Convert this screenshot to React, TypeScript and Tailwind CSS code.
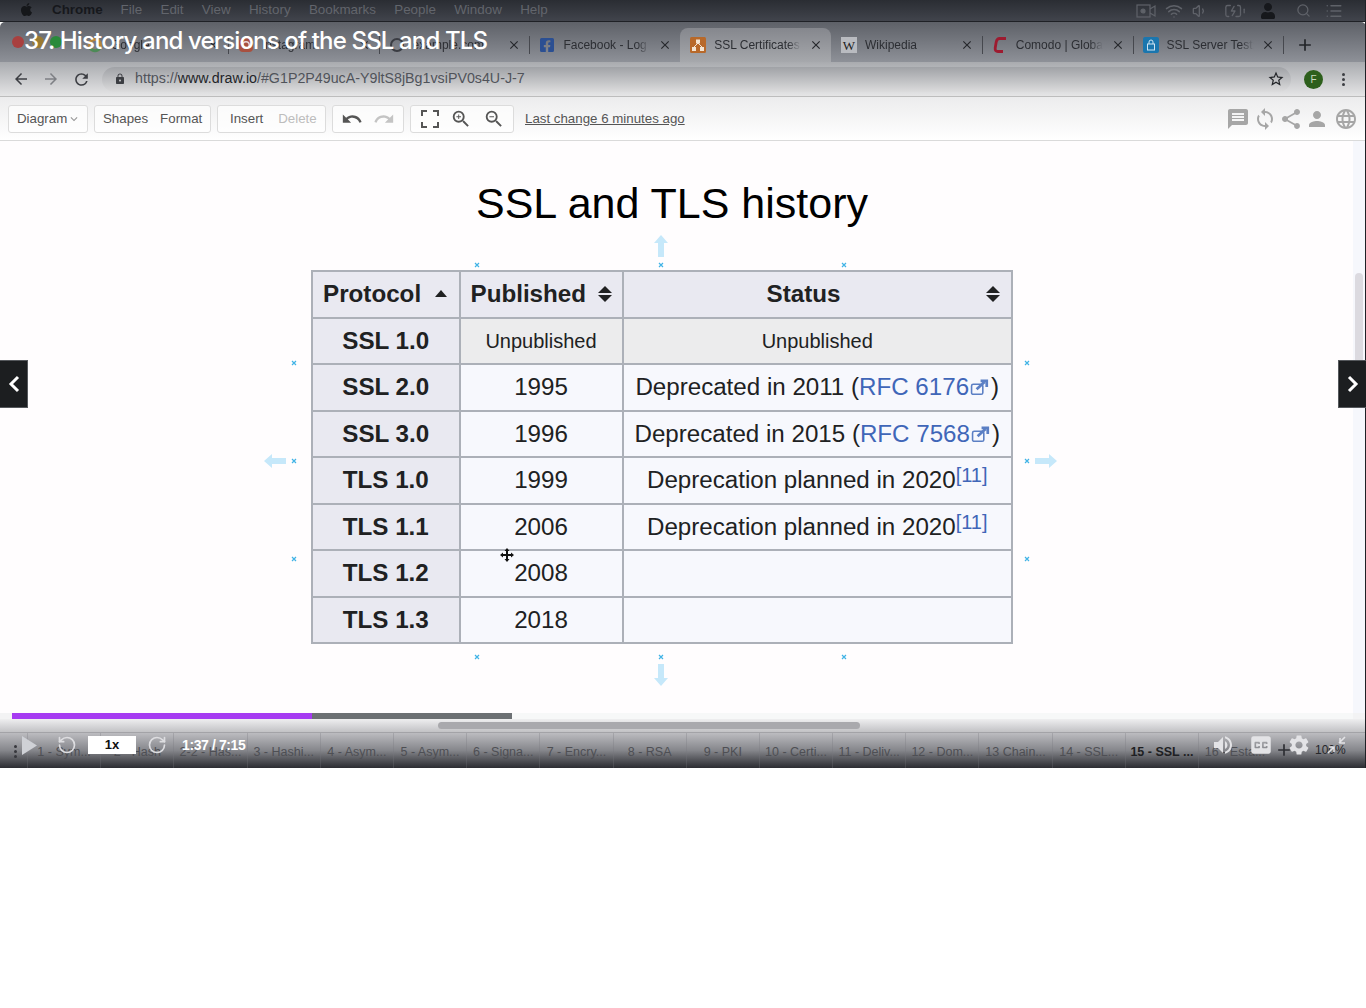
import React from "react";
import { FaApple, FaUser, FaFacebookSquare } from "react-icons/fa";
import {
  MdUndo, MdRedo, MdZoomIn, MdZoomOut, MdMessage, MdSync, MdShare, MdPerson, MdLanguage,
  MdKeyboardArrowDown, MdStarBorder, MdLock, MdArrowBack, MdArrowForward, MdRefresh, MdClose, MdAdd, MdVolumeUp, MdSettings, MdClosedCaption,
} from "react-icons/md";
import { Wifi, Volume1, BatteryCharging, Search, List, RotateCcw, RotateCw } from "lucide-react";

const menu = ["File", "Edit", "View", "History", "Bookmarks", "People", "Window", "Help"];

function Fav({ kind }: { kind: string }) {
  if (kind === "google")
    return (
      <svg width="16" height="16" viewBox="0 0 16 16">
        <circle cx="8" cy="8" r="5.5" fill="none" stroke="#b5863a" strokeWidth="3" />
        <path d="M3 11a6 6 0 0 0 10 0" fill="none" stroke="#4c8a58" strokeWidth="3" />
      </svg>
    );
  if (kind === "insta")
    return (
      <svg width="16" height="16" viewBox="0 0 16 16">
        <rect x="1" y="1" width="14" height="14" rx="4" fill="#a8503f" />
        <circle cx="8" cy="8" r="3.2" fill="none" stroke="#e8d8d8" strokeWidth="1.4" />
      </svg>
    );
  if (kind === "gh")
    return (
      <svg width="16" height="16" viewBox="0 0 16 16">
        <circle cx="8" cy="8" r="6" fill="none" stroke="#3a3c42" strokeWidth="2" />
      </svg>
    );
  if (kind === "fb") return <FaFacebookSquare className="text-[16px] text-[#2b4f92]" />;
  if (kind === "draw")
    return (
      <svg width="16" height="16" viewBox="0 0 16 16">
        <rect width="16" height="16" rx="1.5" fill="#b8692a" />
        <rect x="6" y="2.5" width="4" height="4" fill="#f3e4d2" />
        <rect x="2" y="10" width="4" height="4" fill="#f3e4d2" />
        <rect x="10" y="10" width="4" height="4" fill="#f3e4d2" />
        <path d="M8 6 4 10M8 6l4 4" stroke="#f3e4d2" strokeWidth="1" />
      </svg>
    );
  if (kind === "wiki")
    return (
      <span className="flex h-4 w-4 items-center justify-center bg-[#b9bbc0] font-['Liberation_Serif',serif] text-[13px] leading-none text-[#222]">
        W
      </span>
    );
  if (kind === "comodo")
    return (
      <svg width="16" height="18" viewBox="0 0 16 18">
        <path d="M14 2.5H7.5Q5 2.5 4.2 6L3.2 12Q2.8 15.5 6 15.5H11" fill="none" stroke="#9d1b30" strokeWidth="2.8" />
      </svg>
    );
  return (
    <svg width="16" height="16" viewBox="0 0 16 16">
      <rect width="16" height="16" rx="2" fill="#1b76ae" />
      <rect x="4.5" y="7" width="7" height="6" fill="none" stroke="#cfe4f2" strokeWidth="1" />
      <path d="M6 7V5a2 2 0 0 1 4 0v2" fill="none" stroke="#cfe4f2" strokeWidth="1" />
    </svg>
  );
}

const tabs = [
  { k: "google", t: "Google", sep: false },
  { k: "insta", t: "Instagram", sep: true },
  { k: "gh", t: "example.com", sep: true },
  { k: "fb", t: "Facebook - Log In", sep: true },
  { k: "draw", t: "SSL Certificates", sep: false, active: true },
  { k: "wiki", t: "Wikipedia", sep: false },
  { k: "comodo", t: "Comodo | Global", sep: true },
  { k: "lock", t: "SSL Server Test:", sep: true },
];

const chapters = [
  "1 - Sym...", "2 - Hash", "2-2 - Has...", "3 - Hashi...", "4 - Asym...", "5 - Asym...", "6 - Signa...", "7 - Encry...",
  "8 - RSA", "9 - PKI", "10 - Certi...", "11 - Deliv...", "12 - Dom...", "13 Chain...", "14 - SSL...", "15 - SSL ...", "16 - Esta...",
];

const handles = [
  [477, 265], [661, 265], [844, 265],
  [294, 363], [294, 461], [294, 559],
  [1027, 363], [1027, 461], [1027, 559],
  [477, 657], [661, 657], [844, 657],
];

function Ext() {
  return (
    <svg width="22" height="18" viewBox="0 0 18 16" className="inline-block align-[-1px]">
      <rect x="1.5" y="5.5" width="10" height="9" rx="1.5" fill="none" stroke="#5b7fc4" strokeWidth="1.4" />
      <path d="M6 10 13 3.5M9.5 2.5H15V8" fill="none" stroke="#5b7fc4" strokeWidth="2.4" />
    </svg>
  );
}

function SortUp() {
  return (
    <svg width="12" height="8" viewBox="0 0 12 8">
      <path d="M6 0 12 7H0Z" fill="#202122" />
    </svg>
  );
}

function Sort() {
  return (
    <svg width="14" height="16" viewBox="0 0 14 16">
      <path d="M7 0 14 7H0Z" fill="#202122" />
      <path d="M7 16 14 9H0Z" fill="#202122" />
    </svg>
  );
}

function Ref() {
  return <sup className="relative -top-[6px] align-baseline text-[20px] leading-none text-[#3f66b8]">[11]</sup>;
}

const th = "border-2 border-[#acb0b8] bg-[#e9e9f1] p-0 font-bold text-[#202122]";
const rowHead = "border-2 border-[#acb0b8] bg-[#e9e9f1] p-0 text-center text-[24.2px] font-bold text-[#202122]";
const td = "border-2 border-[#acb0b8] bg-[#f7f8fd] p-0 text-center text-[24.15px] text-[#202122]";
const tdGray = "border-2 border-[#acb0b8] bg-[#ececed] p-0 text-center text-[20px] text-[#202122]";

export default function App() {
  return (
    <div className="relative min-h-[1008px] bg-white font-['Liberation_Sans',Arial,sans-serif]">
      <div className="relative flex h-[768px] flex-col overflow-hidden">
        {/* menu bar */}
        <div className="flex h-[22px] shrink-0 items-center border-b border-[#1f2126] bg-gradient-to-b from-[#2a2d33] to-[#41444c] pl-[19px] pr-[23px] text-[13.4px] text-[#62656c]">
          <FaApple className="mb-[2px] text-[15px] text-[#15171a]" />
          <span className="ml-[18px] font-bold text-[#16181c]">Chrome</span>
          <div className="ml-[18px] flex gap-[18.3px]">
            {menu.map((m) => (
              <span key={m}>{m}</span>
            ))}
          </div>
          <div className="ml-auto flex items-center text-[#5f6269]">
            <svg width="20" height="14" viewBox="0 0 20 14" fill="none" stroke="currentColor" strokeWidth="1.2">
              <rect x="1" y="1" width="13" height="12" />
              <circle cx="7" cy="7" r="2" fill="currentColor" />
              <path d="M14 5l5-3v10l-5-3" />
            </svg>
            <Wifi size={18} className="ml-[9px]" />
            <Volume1 size={16} className="ml-[9px]" />
            <BatteryCharging size={22} strokeWidth={1.4} className="ml-[16px]" />
            <FaUser className="ml-[14px] text-[16px] text-[#16181c]" />
            <Search size={15} className="ml-[20px]" />
            <List size={18} className="ml-[14px]" />
          </div>
        </div>

        {/* tab strip */}
        <div className="flex h-[40px] shrink-0 items-end rounded-t-[5px] bg-gradient-to-b from-[#5e6168] to-[#8e9198] pl-[77px] text-[12px] text-[#2c2e33]">
          {tabs.map((t) => (
            <div
              key={t.t}
              className={
                "relative flex h-[34px] w-[150.8px] shrink-0 items-center pl-[10px] pr-[8px] " +
                (t.active ? "rounded-t-[8px] bg-gradient-to-b from-[#85878d] to-[#a6a8ac]" : "")
              }
            >
              <span className="flex w-[16px] shrink-0 justify-center">
                <Fav kind={t.k} />
              </span>
              <span className="ml-[8px] w-[87px] overflow-hidden whitespace-nowrap [mask-image:linear-gradient(to_right,black_85%,transparent)]">
                {t.t}
              </span>
              <MdClose className="ml-auto text-[14px] text-[#26282c]" />
              {t.sep && <span className="absolute left-0 top-[8px] h-[18px] w-px bg-[#46484e]" />}
            </div>
          ))}
          <span className="relative flex h-[34px] items-center">
            <span className="h-[18px] w-px bg-[#46484e]" />
            <MdAdd className="ml-[11px] text-[20px] text-[#222428]" />
          </span>
        </div>

        {/* address bar */}
        <div className="flex h-[35px] shrink-0 items-center border-b border-[#bdbdbd] bg-gradient-to-b from-[#a9abaf] to-[#e5e5e6] pl-[12px] pr-[14px] text-[#3c3e43]">
          <MdArrowBack className="text-[18px]" />
          <MdArrowForward className="ml-[12px] text-[18px] text-[#7d7f84]" />
          <MdRefresh className="ml-[12px] text-[19px]" />
          <div className="ml-[11px] flex h-[25px] w-[1189px] items-center rounded-full bg-gradient-to-b from-[#a0a2a6] to-[#dcdcdd] pl-[12px] pr-[6px]">
            <MdLock className="text-[12px]" />
            <span className="ml-[9px] text-[14.25px] text-[#50535a]">
              https://<span className="text-[#222428]">www.draw.io</span>/#G1P2P49ucA-Y9ltS8jBg1vsiPV0s4U-J-7
            </span>
            <MdStarBorder className="ml-auto text-[18px] text-[#222428]" />
          </div>
          <span className="ml-[13px] flex h-[19px] w-[19px] items-center justify-center rounded-full bg-[#2d5f1c] text-[10px] text-[#c8d8c0]">
            F
          </span>
          <span className="ml-[19px] flex flex-col gap-[2px]">
            <i className="h-[3px] w-[3px] rounded-full bg-[#3c3e43]" />
            <i className="h-[3px] w-[3px] rounded-full bg-[#3c3e43]" />
            <i className="h-[3px] w-[3px] rounded-full bg-[#3c3e43]" />
          </span>
        </div>

        {/* draw.io toolbar */}
        <div className="flex h-[44px] shrink-0 items-center border-b border-[#dadada] bg-gradient-to-b from-[#ececed] to-white pl-[8px] pr-[8px] text-[13.3px] text-[#555]">
          <div className="flex h-[28px] w-[80px] items-center rounded-[3px] border border-[#dcdcdc] bg-white/70 pl-[8px]">
            Diagram
            <MdKeyboardArrowDown className="text-[14px] text-[#999]" />
          </div>
          <div className="ml-[6px] flex h-[28px] w-[117px] items-center gap-[12px] rounded-[3px] border border-[#dcdcdc] bg-white/70 pl-[8px]">
            <span>Shapes</span>
            <span>Format</span>
          </div>
          <div className="ml-[6px] flex h-[28px] w-[109px] items-center gap-[15px] rounded-[3px] border border-[#dcdcdc] bg-white/70 pl-[12px]">
            <span>Insert</span>
            <span className="text-[#bdbdbd]">Delete</span>
          </div>
          <div className="ml-[6px] flex h-[28px] w-[72px] items-center gap-[10px] rounded-[3px] border border-[#dcdcdc] bg-white/70 pl-[8px] text-[22px]">
            <MdUndo />
            <MdRedo className="text-[#c4c4c4]" />
          </div>
          <div className="ml-[6px] flex h-[28px] w-[104px] items-center gap-[11px] rounded-[3px] border border-[#dcdcdc] bg-white/70 pl-[10px] text-[22px]">
            <svg width="18" height="18" viewBox="0 0 18 18" fill="none" stroke="currentColor" strokeWidth="2">
              <path d="M1 6V1h5M12 1h5v5M17 12v5h-5M6 17H1v-5" />
            </svg>
            <MdZoomIn />
            <MdZoomOut />
          </div>
          <span className="ml-[11px] underline">Last change 6 minutes ago</span>
          <div className="ml-auto flex items-center text-[24px] text-[#a6a6a6]">
            <MdMessage />
            <MdSync className="ml-[3px]" />
            <MdShare className="ml-[2px]" />
            <MdPerson className="ml-[2px]" />
            <MdLanguage className="ml-[5px]" />
          </div>
        </div>

        {/* canvas */}
        <div className="relative flex min-h-0 flex-1 bg-[#fffdfe]">
          <div className="flex-1 pl-[311px]">
            <h1 className="ml-[165px] mt-[35px] whitespace-nowrap text-[43px] font-normal leading-[54px] text-black">
              SSL and TLS history
            </h1>
            <table className="mt-[40px] h-[373px] w-[700px] table-fixed border-collapse">
              <colgroup>
                <col className="w-[147.5px]" />
                <col className="w-[163px]" />
                <col className="w-[389.5px]" />
              </colgroup>
              <thead>
                <tr className="h-[46.5px]">
                  <th className={th}>
                    <div className="flex items-center justify-between pl-[10px] pr-[12px] text-[24.2px]">
                      Protocol <SortUp />
                    </div>
                  </th>
                  <th className={th}>
                    <div className="flex items-center justify-between pl-[10px] pr-[10px] text-[24.2px]">
                      Published <Sort />
                    </div>
                  </th>
                  <th className={th}>
                    <div className="flex items-center justify-between pl-[143px] pr-[11px] text-[24.2px]">
                      Status <Sort />
                    </div>
                  </th>
                </tr>
              </thead>
              <tbody>
                <tr className="h-[46.5px]">
                  <td className={rowHead}>SSL 1.0</td>
                  <td className={tdGray}>Unpublished</td>
                  <td className={tdGray}>Unpublished</td>
                </tr>
                <tr className="h-[46.5px]">
                  <td className={rowHead}>SSL 2.0</td>
                  <td className={td}>1995</td>
                  <td className={td}>
                    Deprecated in 2011 (<span className="text-[#3f66b8]">RFC 6176</span>
                    <Ext />)
                  </td>
                </tr>
                <tr className="h-[46.5px]">
                  <td className={rowHead}>SSL 3.0</td>
                  <td className={td}>1996</td>
                  <td className={td}>
                    Deprecated in 2015 (<span className="text-[#3f66b8]">RFC 7568</span>
                    <Ext />)
                  </td>
                </tr>
                <tr className="h-[46.5px]">
                  <td className={rowHead}>TLS 1.0</td>
                  <td className={td}>1999</td>
                  <td className={td}>
                    Deprecation planned in 2020
                    <Ref />
                  </td>
                </tr>
                <tr className="h-[46.5px]">
                  <td className={rowHead}>TLS 1.1</td>
                  <td className={td}>2006</td>
                  <td className={td}>
                    Deprecation planned in 2020
                    <Ref />
                  </td>
                </tr>
                <tr className="h-[46.5px]">
                  <td className={rowHead}>TLS 1.2</td>
                  <td className={td}>2008</td>
                  <td className={td} />
                </tr>
                <tr className="h-[46.5px]">
                  <td className={rowHead}>TLS 1.3</td>
                  <td className={td}>2018</td>
                  <td className={td} />
                </tr>
              </tbody>
            </table>
          </div>
          {/* canvas scrollbar */}
          <div className="w-[13px] shrink-0 bg-[#f6f7fc] pl-[2px] pt-[132px]">
            <div className="h-[120px] w-[8px] rounded-full bg-[#dcdae0]" />
          </div>
        </div>

        {/* progress */}
        <div className="flex h-[6px] shrink-0 bg-[#f3f3f4] pl-[12px] pr-[13px]">
          <div className="h-full w-[300px] bg-[#a63bf2]" />
          <div className="h-full w-[200px] bg-[#6c7073]" />
          <div className="h-full flex-1 bg-[#f7f8f8]" />
        </div>
        <div className="h-[13px] shrink-0 bg-gradient-to-b from-[#efeff0] to-[#c2c2c5] pl-[438px] pt-[3px]">
          <div className="h-[7px] w-[422px] rounded-full bg-[#a9a9ad]" />
        </div>

        {/* player bar */}
        <div className="relative flex h-[36px] shrink-0 border-t border-[#a3a3a7] bg-gradient-to-b from-[#bcbcc0] via-[#85868b] to-[#2c2d32] pl-[27px] text-[12.5px] text-[#4e4f54]">
          {chapters.map((c, i) => (
            <div
              key={c}
              className={
                "flex h-full w-[73.2px] shrink-0 items-center justify-center whitespace-nowrap border-l border-[#77787d]/30 pt-[4px] " +
                (i === 15 ? "font-bold text-[#1e1f23]" : "")
              }
            >
              {c}
            </div>
          ))}
        </div>

        {/* player controls, over the chapter strip */}
        <div className="absolute left-0 right-0 top-[733px] flex h-[24px] items-center pl-[14px] pr-[19px]">
          <span className="mt-[12px] flex flex-col gap-[2px]">
            <i className="h-[3px] w-[3px] rounded-full bg-[#37383d]" />
            <i className="h-[3px] w-[3px] rounded-full bg-[#37383d]" />
            <i className="h-[3px] w-[3px] rounded-full bg-[#37383d]" />
          </span>
          <svg width="15" height="19" viewBox="0 0 15 19" className="ml-[5px]">
            <path d="M0 0 15 9.5 0 19Z" fill="#cfd1d6" />
          </svg>
          <RotateCcw size={20} className="ml-[20px] text-[#dddde0]" />
          <span className="ml-[11px] flex h-[18px] w-[48px] items-center justify-center bg-white text-[13px] font-bold text-[#111]">
            1x
          </span>
          <RotateCw size={20} className="ml-[11px] text-[#dddde0]" />
          <span className="ml-[15px] text-[14px] font-bold tracking-[-0.4px] text-white">1:37 / 7:15</span>
          <div className="ml-auto flex items-center text-[#e3e3e6]">
            <MdVolumeUp className="text-[24px]" />
            <MdClosedCaption className="ml-[13px] text-[26px]" />
            <MdAdd className="mt-[10px] text-[20px] text-[#2d2e33]" />
            <MdSettings className="ml-[-7px] text-[24px]" />
            <span className="ml-[4px] mt-[10px] w-[12px] whitespace-nowrap text-[12px] text-[#26272b]">100%</span>
            <svg width="20" height="20" viewBox="0 0 20 20" fill="none" stroke="currentColor" strokeWidth="1.6">
              <path d="M1 18l6-6M2 12h5v5M18 2l-6 6M13 3v5h5" />
            </svg>
          </div>
        </div>

        {/* dark edge of the recording */}
        <div className="absolute bottom-0 right-0 top-0 w-px bg-[#1f2126]" />
      </div>

      {/* window title over the recording */}
      <div className="absolute left-[12px] top-[36px] h-[12px] w-[12px] rounded-full bg-[#a8403f]" />
      <div className="absolute left-[32px] top-[36px] h-[12px] w-[12px] rounded-full bg-[#9a7a32]" />
      <div className="absolute left-[50px] top-[36px] h-[12px] w-[12px] rounded-full bg-[#2a8a3a]" />
      <div className="absolute left-[24px] top-[26px] whitespace-nowrap font-['Inter',sans-serif] text-[24px] font-medium leading-[30px] tracking-[-0.85px] text-white">
        37. History and versions of the SSL and TLS
      </div>

      {/* previous / next */}
      <div className="absolute left-0 top-[360px] flex h-[48px] w-[28px] items-center justify-center border-y border-r border-[#55585c] bg-[#1c1e20]">
        <svg width="12" height="18" viewBox="0 0 12 18" fill="none" stroke="white" strokeWidth="3">
          <path d="M10 2 3 9l7 7" />
        </svg>
      </div>
      <div className="absolute right-0 top-[360px] flex h-[48px] w-[28px] items-center justify-center border-y border-l border-[#55585c] bg-[#1c1e20]">
        <svg width="12" height="18" viewBox="0 0 12 18" fill="none" stroke="white" strokeWidth="3">
          <path d="m2 2 7 7-7 7" />
        </svg>
      </div>

      {/* draw.io connection points */}
      {handles.map(([x, y]) => (
        <svg key={x + "-" + y} width="6" height="6" viewBox="0 0 6 6" className="absolute" style={{ left: x - 3, top: y - 3 }}>
          <path d="M1 1l4 4M5 1 1 5" stroke="#41b3e6" strokeWidth="1.2" />
        </svg>
      ))}

      {/* draw.io hover arrows */}
      <svg width="14" height="22" viewBox="0 0 14 22" className="absolute left-[654px] top-[235px]">
        <path d="M7 0 14 8H10V22H4V8H0Z" fill="#c6e8fa" />
      </svg>
      <svg width="14" height="22" viewBox="0 0 14 22" className="absolute left-[654px] top-[664px]">
        <path d="M7 22 14 14H10V0H4V14H0Z" fill="#c6e8fa" />
      </svg>
      <svg width="22" height="14" viewBox="0 0 22 14" className="absolute left-[264px] top-[454px]">
        <path d="M0 7 8 0V4H22V10H8V14Z" fill="#c6e8fa" />
      </svg>
      <svg width="22" height="14" viewBox="0 0 22 14" className="absolute left-[1035px] top-[454px]">
        <path d="M22 7 14 0V4H0V10H14V14Z" fill="#c6e8fa" />
      </svg>

      {/* mouse cursor */}
      <svg width="14" height="14" viewBox="0 0 14 14" className="absolute left-[500px] top-[548px]">
        <path d="M7 0 9.5 3H8V6H11V4.5L14 7 11 9.5V8H8V11H9.5L7 14 4.5 11H6V8H3V9.5L0 7 3 4.5V6H6V3H4.5Z" fill="#111" />
      </svg>
    </div>
  );
}
